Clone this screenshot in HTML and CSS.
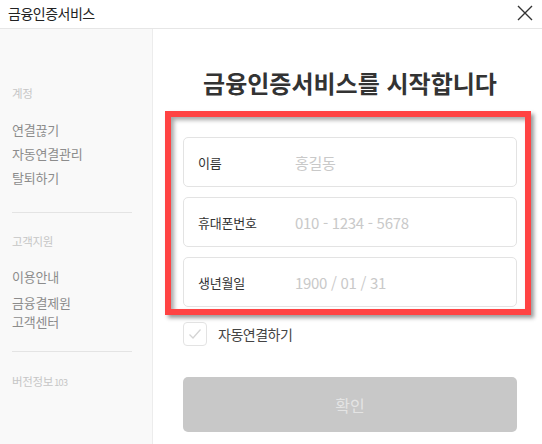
FILE: index.html
```html
<!DOCTYPE html>
<html lang="ko">
<head>
<meta charset="utf-8">
<link rel="stylesheet" href="styles.css">
</head>
<body>
<div class="window">
  <header class="titlebar">
    <span class="app-title">금융인증서비스</span>
    <svg class="close" width="16" height="16" viewBox="0 0 16 16"><path d="M1 1L15 15M15 1L1 15" stroke="#333" stroke-width="1.4" fill="none"/></svg>
  </header>
  <div class="body">
    <aside class="sidebar">
      <div class="sec-head first">계정</div>
      <div class="item first-item">연결끊기</div>
      <div class="item">자동연결관리</div>
      <div class="item">탈퇴하기</div>
      <hr class="divider d1">
      <div class="sec-head second">고객지원</div>
      <div class="item first-item2">이용안내</div>
      <div class="item multi">금융결제원<br>고객센터</div>
      <hr class="divider d2">
      <div class="sec-head version">버전정보<span class="ver">103</span></div>
    </aside>
    <main class="main">
      <h1 class="title">금융인증서비스를 시작합니다</h1>
      <div class="fields">
        <div class="field"><span class="label">이름</span><span class="ph">홍길동</span></div>
        <div class="field"><span class="label">휴대폰번호</span><span class="ph">010 - 1234 - 5678</span></div>
        <div class="field"><span class="label">생년월일</span><span class="ph">1900 / 01 / 31</span></div>
      </div>
      <div class="check-row">
        <span class="checkbox"><svg width="14" height="12" viewBox="0 0 14 12"><path d="M1.5 6.5L5 10L12.5 1.5" stroke="#d4d4d4" stroke-width="1.3" fill="none"/></svg></span>
        <span class="check-label">자동연결하기</span>
      </div>
      <button class="confirm">확인</button>
      <div class="highlight"></div>
    </main>
  </div>
</div>
</body>
</html>
```

FILE: styles.css
```css
* { box-sizing: border-box; }
html, body { margin: 0; padding: 0; }
body {
  width: 542px;
  height: 444px;
  overflow: hidden;
  background: #fff;
  font-family: "Noto Sans CJK KR", "Noto Sans", sans-serif;
}
.window { width: 542px; height: 444px; display: flex; flex-direction: column; }
.titlebar {
  height: 29px;
  border-bottom: 1px solid #e6e6e6;
  display: flex;
  align-items: center;
  justify-content: space-between;
  padding: 0 8px 0 8px;
}
.app-title {
  font-size: 14px;
  letter-spacing: -0.5px;
  color: #222;
  line-height: 20px;
  margin-top: -2px;
}
.close { margin-right: 1px; margin-top: -3px; }
.body { flex: 1; display: flex; }
.sidebar {
  width: 153px;
  background: #f9f9f9;
  border-right: 1px solid #ececec;
  padding: 54px 20px 0 12px;
}
.sec-head {
  font-size: 11.5px;
  line-height: 20px;
  color: #c6c6c6;
  letter-spacing: -0.3px;
}
.ver { font-size: 9px; letter-spacing: -0.6px; margin-left: 1px; }
.item {
  font-size: 13px;
  line-height: 24px;
  color: #8c8c8c;
  letter-spacing: -0.2px;
}
.first-item { margin-top: 15px; }
.first-item2 { margin-top: 14px; }
.item.multi { line-height: 19px; margin-top: 4px; }
.divider {
  border: 0;
  border-top: 1px solid #e4e4e4;
  margin: 0;
}
.d1 { margin-top: 22px; }
.sec-head.second { margin-top: 18px; }
.d2 { margin-top: 20px; }
.sec-head.version { margin-top: 19px; }
.main {
  flex: 1;
  position: relative;
  padding: 39px 25px 0 30px;
  display: flex;
  flex-direction: column;
}
.title {
  margin: 0;
  font-size: 24px;
  font-weight: 700;
  line-height: 30px;
  color: #333;
  text-align: center;
  letter-spacing: 0;
}
.fields {
  margin-top: 39px;
  display: flex;
  flex-direction: column;
  gap: 10px;
}
.field {
  height: 50px;
  border: 1px solid #e3e3e3;
  border-radius: 5px;
  display: flex;
  align-items: center;
  padding-left: 14px;
}
.label {
  width: 97px;
  font-size: 13px;
  color: #333;
  letter-spacing: -0.2px;
}
.ph {
  font-size: 15px;
  color: #c9c9c9;
  letter-spacing: -0.3px;
}
.check-row {
  margin-top: 15px;
  height: 24px;
  display: flex;
  align-items: center;
}
.checkbox {
  width: 24px;
  height: 24px;
  border: 1px solid #e3e3e3;
  border-radius: 4px;
  display: flex;
  align-items: center;
  justify-content: center;
}
.check-label {
  margin-left: 11px;
  font-size: 14px;
  letter-spacing: -0.5px;
  color: #444;
}
.confirm {
  margin-top: 31px;
  height: 55px;
  border: 0;
  border-radius: 5px;
  background: #c8c8c8;
  color: #e4e4e4;
  font-family: inherit;
  font-size: 16px;
  padding: 0;
}
.highlight {
  position: absolute;
  left: 12px;
  top: 82px;
  width: 366px;
  height: 204px;
  border: 6px solid #ff4343;
  box-shadow: 3px 3px 4px rgba(0,0,0,0.4), inset 3px 3px 4px rgba(0,0,0,0.35);
  pointer-events: none;
}
```
